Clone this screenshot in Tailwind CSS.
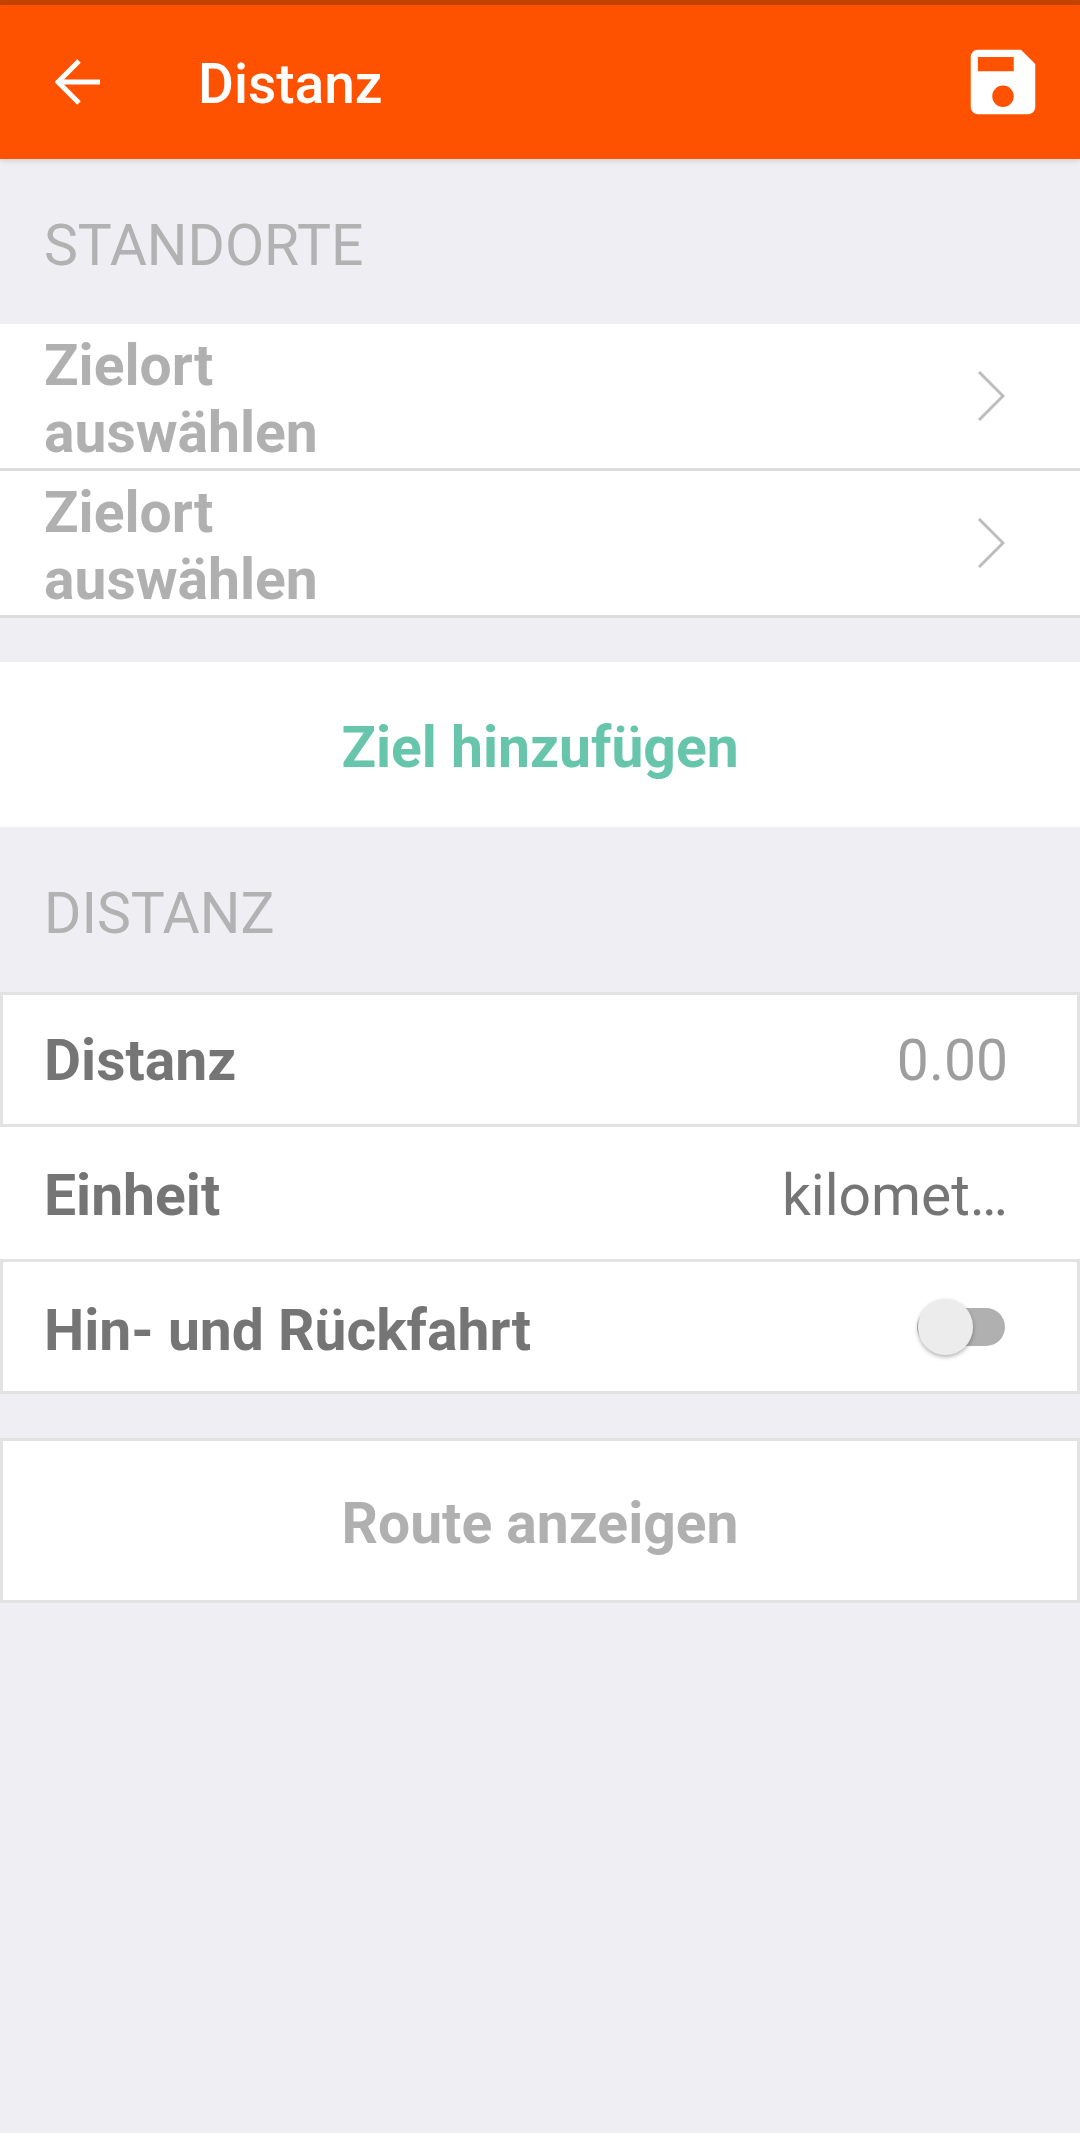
<!DOCTYPE html>
<html lang="de">
  <head>
    <meta charset="UTF-8">
    <meta name="viewport" content="width=device-width, initial-scale=1.0">
    <title>Distanz</title>
    <script src="https://cdn.jsdelivr.net/npm/@tailwindcss/browser@4"></script>
  </head>

  <body class="bg-[#eeeef3] font-['Roboto',sans-serif]">
    <div class="w-[1080px] h-[2133px] flex flex-col overflow-hidden">

      <!-- Status strip -->
      <div class="h-[5px] bg-[#c74300]"></div>

      <!-- Top bar -->
      <div class="relative h-[154px] bg-[#ff5200] shadow-[0_2px_6px_rgba(0,0,0,0.12)] flex items-center justify-between pl-[55px] pr-[34px]">
        <div class="flex items-center gap-[97px]">
          <svg class="w-[46px] h-[46px]" viewBox="0 0 46 46" fill="none" stroke="#ffffff" stroke-width="5">
            <path d="M45 23H3M24 2L3 23L24 44"/>
          </svg>
          <span class="text-[55px] leading-[64px] pt-[3px] font-medium text-white">Distanz</span>
        </div>
        <svg class="w-[86px] h-[86px]" viewBox="0 0 24 24" fill="#ffffff">
          <path d="M17 3H5c-1.11 0-2 .9-2 2v14c0 1.1.89 2 2 2h14c1.1 0 2-.9 2-2V7l-4-4zm-5 16c-1.66 0-3-1.34-3-3s1.34-3 3-3 3 1.34 3 3-1.34 3-3 3zm3-10H5V5h10v4z"/>
        </svg>
      </div>

      <!-- Standorte -->
      <div class="h-[165px] pt-[9px] pl-[44px] flex items-center text-[57px] text-[#b2b2b2]">STANDORTE</div>

      <div class="h-[147px] bg-white border-b-[3px] border-[#dcdcdc] flex items-center justify-between pl-[44px] pr-[75px]">
        <div class="text-[57px] leading-[67px] pt-[6px] font-bold text-[#b0b0b0]">Zielort<br>auswählen</div>
        <svg class="w-[28px] h-[50px]" viewBox="0 0 28 50" fill="none" stroke="#bdbdbd" stroke-width="3">
          <path d="M2 1L26 25L2 49"/>
        </svg>
      </div>
      <div class="h-[147px] bg-white border-b-[3px] border-[#dcdcdc] flex items-center justify-between pl-[44px] pr-[75px]">
        <div class="text-[57px] leading-[67px] pt-[6px] font-bold text-[#b0b0b0]">Zielort<br>auswählen</div>
        <svg class="w-[28px] h-[50px]" viewBox="0 0 28 50" fill="none" stroke="#bdbdbd" stroke-width="3">
          <path d="M2 1L26 25L2 49"/>
        </svg>
      </div>

      <div class="mt-[44px] h-[165px] pt-[6px] bg-white flex items-center justify-center text-[57px] font-bold text-[#66c5ab]">Ziel hinzufügen</div>

      <!-- Distanz -->
      <div class="h-[165px] pt-[9px] pl-[44px] flex items-center text-[57px] text-[#b2b2b2]">DISTANZ</div>

      <div class="h-[135px] pt-[3px] bg-white border-[3px] border-[#e2e2e2] flex items-center justify-between pl-[41px] pr-[69px]">
        <span class="text-[57px] font-bold text-[#757575]">Distanz</span>
        <span class="text-[57px] text-[#9e9e9e]">0.00</span>
      </div>
      <div class="h-[132px] pt-[5px] bg-white flex items-center justify-between pl-[44px] pr-[72px]">
        <span class="text-[57px] font-bold text-[#757575]">Einheit</span>
        <span class="text-[57px] text-[#757575]">kilomet…</span>
      </div>
      <div class="h-[135px] bg-white border-[3px] border-[#e2e2e2] flex items-center justify-between pl-[41px] pr-[72px]">
        <span class="text-[57px] pt-[8px] font-bold text-[#757575]">Hin- und Rückfahrt</span>
        <div class="relative w-[88px] h-[38px] rounded-full bg-[#b0b0b0]">
          <div class="absolute left-[1px] top-[-9px] w-[55px] h-[56px] rounded-full bg-[#ececec] shadow-[0_2px_4px_rgba(0,0,0,0.3)]"></div>
        </div>
      </div>

      <div class="mt-[44px] h-[165px] pt-[6px] bg-white border-[3px] border-[#e2e2e2] flex items-center justify-center text-[57px] font-bold text-[#b0b0b0]">Route anzeigen</div>

    </div>
  </body>
</html>
